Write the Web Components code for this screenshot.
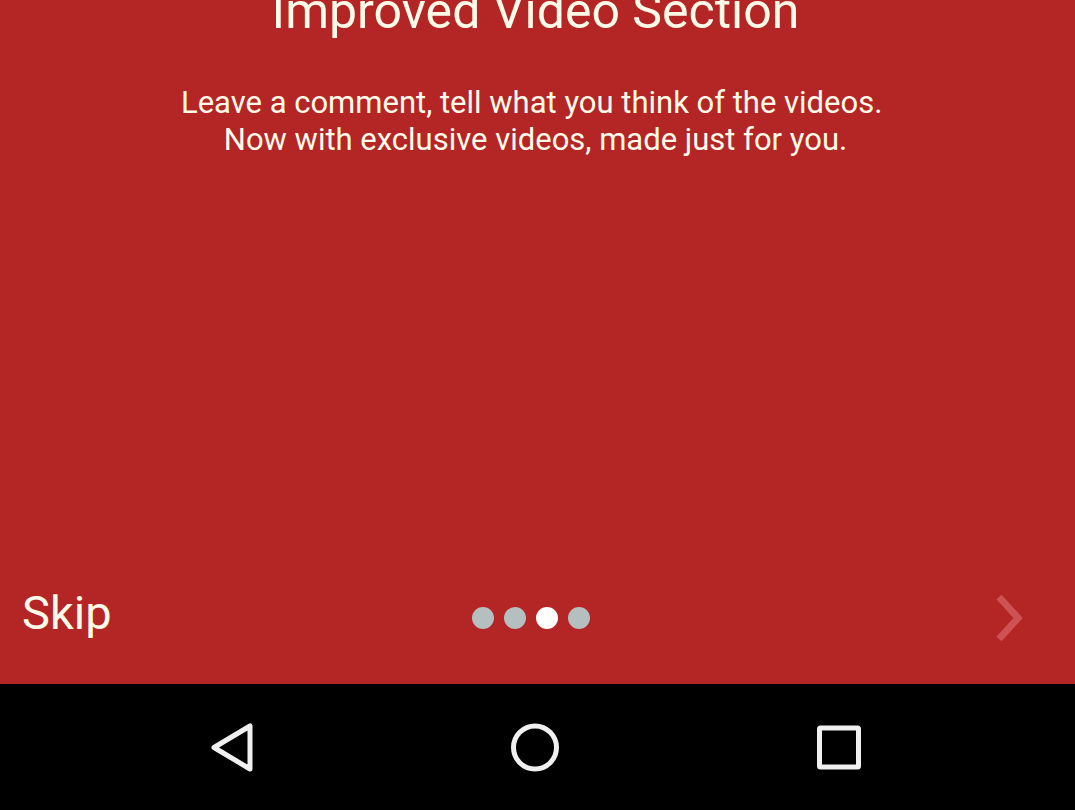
<!DOCTYPE html>
<html lang="en">
<head>
<meta charset="utf-8">
<meta name="viewport" content="width=device-width, initial-scale=1">
<title>Improved Video Section</title>
<style>
body { margin: 0; background: #b42525; font-family: Roboto, sans-serif; }
</style>
</head>
<body>
<intro-screen>
  <intro-slide>
    <span slot="title">Improved Video Section</span>
    <span slot="text">Leave a comment, tell what you think of the videos.&nbsp;<br>Now with exclusive videos, made just for you.</span>
  </intro-slide>
  <intro-controls>
    <page-dots count="4" current="3"></page-dots>
  </intro-controls>
  <system-nav></system-nav>
</intro-screen>
<script>
const define = (name, html, setup) => customElements.define(name, class extends HTMLElement {
  connectedCallback() {
    if (this.shadowRoot) return;
    const t = document.createElement('template');
    t.innerHTML = html;
    this.attachShadow({ mode: 'open' }).append(t.content.cloneNode(true));
    if (setup) setup(this);
  }
});

define('intro-screen', `
<style>
  :host { display: flex; flex-direction: column; min-height: 100vh; overflow: hidden; background: #b42525; color: #fffbe9; }
  ::slotted(intro-slide) { flex: 1; }
</style>
<slot></slot>`);

define('intro-slide', `
<style>
  :host { display: block; padding-right: 4px; text-align: center; }
  h1 { margin: -19px 0 43px; font-size: 50px; line-height: 60px; font-weight: 400; }
  p { margin: 0; font-size: 31px; line-height: 37px; }
</style>
<h1><slot name="title"></slot></h1>
<p><slot name="text"></slot></p>`);

define('page-dots', `
<style>
  :host { display: flex; gap: 10px; }
  i { width: 22px; height: 22px; border-radius: 50%; background: #b5bfc0; }
  i.on { background: #fff; }
</style>`, el => {
  const count = Number(el.getAttribute('count'));
  const current = Number(el.getAttribute('current'));
  for (let n = 1; n <= count; n++) {
    const dot = document.createElement('i');
    if (n === current) dot.className = 'on';
    el.shadowRoot.append(dot);
  }
});

define('intro-controls', `
<style>
  :host { display: grid; grid-template-columns: 1fr auto 1fr; align-items: center; height: 132px; padding: 0 36px 0 22px; }
  button { padding: 0; border: 0; background: none; color: inherit; font: inherit; }
  .skip { justify-self: start; padding-bottom: 10px; font-size: 47px; line-height: 56px; }
  .next { justify-self: end; width: 64px; height: 64px; }
  svg { display: block; }
</style>
<button class="skip" type="button">Skip</button>
<slot></slot>
<button class="next" type="button" aria-label="Next">
  <svg width="64" height="64" viewBox="0 0 64 64" fill="none" stroke="#cc5253" stroke-width="7"><path d="M24 11 43 32 24 53"/></svg>
</button>`);

define('system-nav', `
<style>
  :host { display: block; background: #000; }
  nav { display: grid; grid-template-columns: repeat(3, 304px); justify-content: center; justify-items: center; align-items: center; height: 126px; padding-right: 5px; }
  button { padding: 0; border: 0; background: none; }
  svg { display: block; fill: none; stroke: #f0f0f0; stroke-width: 5; stroke-linejoin: round; }
</style>
<nav aria-label="System">
  <button type="button" aria-label="Back"><svg width="64" height="64" viewBox="0 0 64 64"><path d="M51 11V54L15 32.500Z"/></svg></button>
  <button type="button" aria-label="Home"><svg width="64" height="64" viewBox="0 0 64 64"><circle cx="32" cy="32.500" r="21.500"/></svg></button>
  <button type="button" aria-label="Overview"><svg width="64" height="64" viewBox="0 0 64 64"><rect x="12.500" y="13" width="39" height="39" rx="1"/></svg></button>
</nav>`);
</script>
</body>
</html>
